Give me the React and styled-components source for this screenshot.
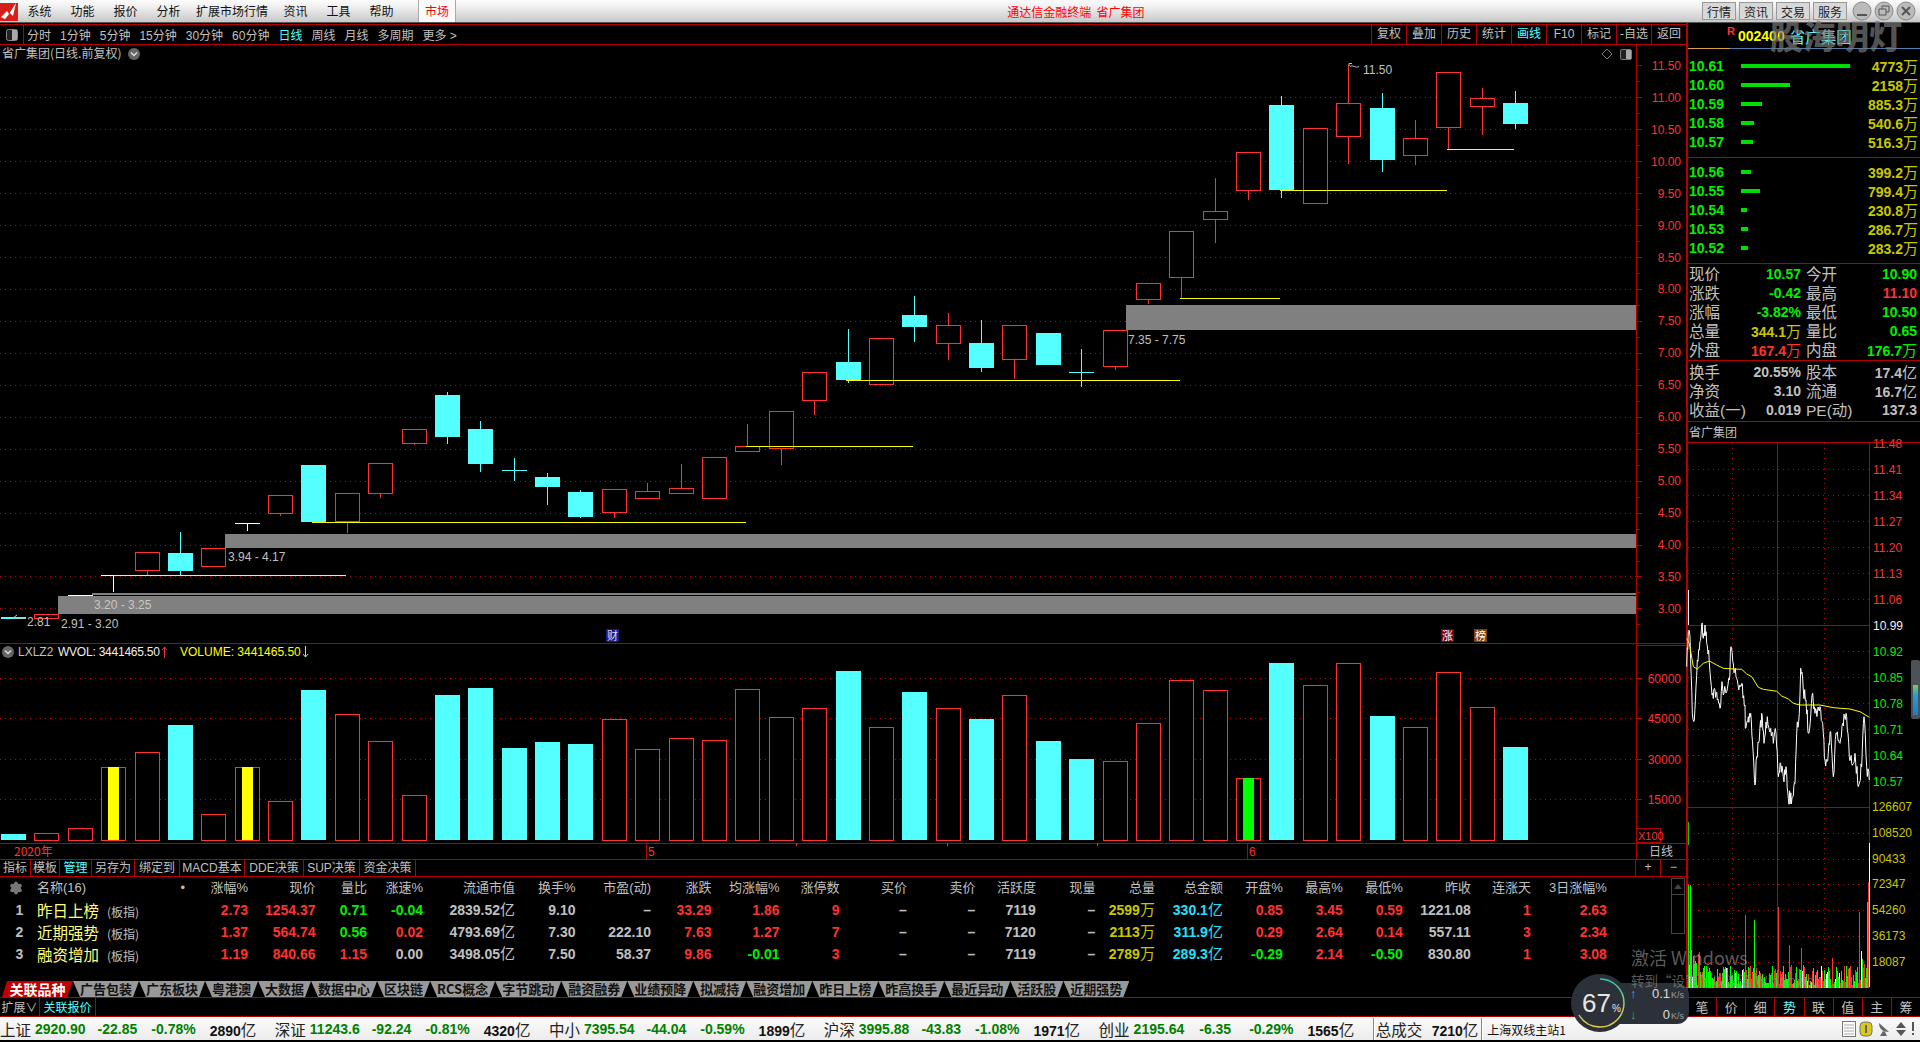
import React from "react"
import styled, { createGlobalStyle } from "styled-components"
import { Settings } from "lucide-react"

const LINE = "#b40000"
const RED = "#ff3232"
const GREEN = "#00f000"
const CYAN = "#54ffff"
const OLIVE = "#c8c800"
const GRAY = "#c0c0c0"
const FONT = `"Liberation Sans", "Noto Sans CJK SC", sans-serif`
const CJK = `"Noto Sans CJK SC", "Liberation Sans", sans-serif`

const GlobalStyle = createGlobalStyle`
  html, body {
    margin: 0;
    background: #000;
    overflow: hidden;
  }
`

const Page = styled.div`
  position: relative;
  width: 1920px;
  height: 1042px;
  background: #000;
  overflow: hidden;
  font-family: ${CJK};
  color: ${GRAY};
`

/* top menu */
const MenuBar = styled.div`
  display: flex;
  align-items: center;
  height: 22px;
  border-bottom: 1px solid #555;
  background: linear-gradient(#fcfcfc, #f0f0f0 30%, #c8c8c8);
  font-size: 12px;
  color: #111;
`
const Logo = styled.svg`
  width: 18px;
  height: 19px;
  flex: none;
`
const MenuItem = styled.div`
  padding: 0 ${(p) => p.$pad || 9.5}px;
  line-height: 22px;
  white-space: nowrap;
`
const MarketTab = styled.div`
  margin-left: 15px;
  width: 38px;
  box-sizing: border-box;
  height: 22px;
  line-height: 22px;
  text-align: center;
  white-space: nowrap;
  background: #fafafa;
  border-left: 1px solid #aaa;
  border-right: 1px solid #aaa;
  color: #f00;
`
const AppTitle = styled.div`
  margin-left: 551px;
  color: #f00;
  white-space: pre;
`
const MenuRight = styled.div`
  display: flex;
  align-items: center;
  margin-left: auto;
  padding-right: 4px;
`
const MenuButton = styled.div`
  width: 34px;
  height: 18px;
  line-height: 17px;
  text-align: center;
  box-sizing: border-box;
  margin-right: 3px;
  background: #d8d8d8;
  border: 1px solid #999;
  color: #222;
`
const WinButton = styled.svg`
  width: 20px;
  height: 20px;
  margin-left: 2px;
`

/* main layout */
const Main = styled.div`
  display: flex;
  height: 994px;
`
const LeftColumn = styled.div`
  display: flex;
  flex-direction: column;
  width: 1686px;
  flex: none;
`
const RightColumn = styled.div`
  display: flex;
  flex-direction: column;
  flex: 1;
  border-left: 2px solid ${LINE};
  min-width: 0;
`

/* period toolbar */
const Toolbar = styled.div`
  display: flex;
  align-items: center;
  height: 19px;
  margin-top: 1px;
  border-top: 1px solid ${LINE};
  border-bottom: 1px solid ${LINE};
  font-size: 12px;
`
const PanelToggle = styled.div`
  display: flex;
  align-items: center;
  justify-content: center;
  width: 23px;
  height: 100%;
  border-right: 1px solid ${LINE};
  margin-right: 3px;
`
const Periods = styled.div`
  display: flex;
  gap: 9px;
`
const Period = styled.span`
  color: ${(p) => (p.$active ? CYAN : GRAY)};
  font-family: ${FONT};
  white-space: nowrap;
`
const ToolCells = styled.div`
  display: flex;
  height: 100%;
  margin-left: auto;
`
const ToolCell = styled.div`
  width: 35px;
  box-sizing: border-box;
  text-align: center;
  line-height: 19px;
  white-space: nowrap;
  border-left: 1px solid ${LINE};
  color: ${(p) => (p.$active ? CYAN : GRAY)};
  font-family: ${FONT};
`

/* charts */
const ChartSvg = styled.svg`
  display: block;
  flex: none;
  overflow: visible;
`
const SvgText = styled.text`
  font-family: ${FONT};
  font-size: ${(p) => p.$size || 12}px;
  fill: ${(p) => p.$c || RED};
`

/* indicator tabs */
const IndicatorRow = styled.div`
  display: flex;
  height: 16px;
  border-bottom: 1px solid ${LINE};
  font-size: 12px;
  font-family: ${FONT};
`
const IndicatorCell = styled.div`
  width: ${(p) => p.$w}px;
  box-sizing: border-box;
  text-align: center;
  line-height: 16px;
  border-right: 1px solid ${LINE};
  white-space: nowrap;
  color: ${(p) => (p.$active ? CYAN : GRAY)};
`
const ZoomCells = styled.div`
  display: flex;
  margin-left: auto;
`
const ZoomCell = styled.div`
  width: ${(p) => p.$w}px;
  text-align: center;
  line-height: 15px;
  border-left: 1px solid ${LINE};
  color: ${GRAY};
`

/* block table */
const TableWrap = styled.div`
  display: flex;
  height: 104px;
`
const Table = styled.div`
  display: grid;
  grid-template-columns: 37px 168px 43px 67.5px 51.5px 56px 92px 60.5px 75.5px 60.5px 68px 60px 67.4px 68.5px 60.5px 59.5px 59.5px 68px 60px 60px 60px 68px 60px 76px;
  grid-auto-rows: 22px;
  align-content: start;
`
const HeadCell = styled.div`
  font-size: 13px;
  line-height: 22px;
  text-align: right;
  white-space: nowrap;
  color: ${GRAY};
  font-family: ${FONT};
`
const HeadName = styled(HeadCell)`
  text-align: left;
  display: flex;
  justify-content: space-between;
  padding-right: 20px;
`
const GearCell = styled.div`
  display: flex;
  align-items: center;
  padding-left: 9px;
`
const Cell = styled.div`
  font-family: ${FONT};
  font-size: 14px;
  font-weight: 700;
  line-height: 22px;
  text-align: right;
  white-space: nowrap;
  color: ${(p) => p.$c || GRAY};
`
const Unit = styled.span`
  font-size: 15px;
  font-weight: 400;
`
const IndexCell = styled.div`
  font-family: ${FONT};
  font-size: 14px;
  line-height: 22px;
  text-align: center;
  padding-left: 2px;
  font-weight: 700;
`
const NameCell = styled.div`
  line-height: 22px;
  white-space: nowrap;
  color: #ffff80;
  font-size: 15.5px;
`
const NameTag = styled.span`
  margin-left: 8px;
  font-size: 12px;
  color: ${GRAY};
`
const ScrollBar = styled.div`
  display: flex;
  flex-direction: column;
  width: 12px;
  height: 54px;
  margin: 1px 1px 0 auto;
  border: 1px solid #444;
`
const ScrollButton = styled.div`
  height: 15px;
  border-bottom: 1px solid #444;
  display: flex;
  align-items: center;
  justify-content: center;
  &::after {
    content: "";
    border: 4px solid transparent;
    border-top: 0;
    border-bottom: 5px solid #444;
  }
`

/* block tabs */
const BlockTabs = styled.div`
  display: flex;
  align-items: stretch;
  height: 16px;
  padding-left: 2px;
  border-bottom: 1px solid ${LINE};
`
const BlockTab = styled.div`
  padding: 0 ${(p) => (p.$active ? 7.5 : 7)}px;
  font-size: ${(p) => (p.$active ? 14 : 13)}px;
  font-weight: 700;
  line-height: 16px;
  white-space: nowrap;
  background: ${(p) => (p.$active ? "#c00000" : "#999")};
  color: ${(p) => (p.$active ? "#fff" : "#111")};
  clip-path: polygon(5px 0, 100% 0, calc(100% - 6px) 100%, 0 100%);
  ${(p) => !p.$active && "clip-path: polygon(0 0, 100% 0, calc(100% - 6px) 100%, 7px 100%);"}
`
const ExtendRow = styled.div`
  display: flex;
  height: 18px;
  border-bottom: 1px solid ${LINE};
  font-size: 12px;
`
const ExtendCell = styled.div`
  width: ${(p) => p.$w}px;
  text-align: center;
  line-height: 18px;
  border-right: 1px solid ${LINE};
  color: ${(p) => (p.$active ? CYAN : GRAY)};
  box-sizing: border-box;
`

/* right panel */
const StockHead = styled.div`
  display: flex;
  align-items: center;
  height: 26px;
  padding-left: 39px;
  box-sizing: border-box;
  border-bottom: 1px solid #4a7fb0;
  position: relative;
  &::after {
    content: "";
    position: absolute;
    left: 0;
    bottom: -1px;
    width: 42px;
    height: 1px;
    background: #d9a040;
  }
`
const StockMark = styled.span`
  color: ${RED};
  font: 700 11px ${FONT};
  margin-right: 3px;
  margin-top: -9px;
`
const StockCode = styled.span`
  color: #ff0;
  font: 700 14px ${FONT};
  margin-right: 5px;
`
const StockName = styled.span`
  color: ${CYAN};
  font-size: 15.5px;
`
const Book = styled.div`
  padding-top: ${(p) => p.$top}px;
  height: ${(p) => p.$h}px;
  box-sizing: border-box;
  border-bottom: 1px solid ${LINE};
`
const BookRow = styled.div`
  display: flex;
  align-items: center;
  height: 19px;
  padding: 0 2px 0 1px;
`
const BookPrice = styled.div`
  width: 52px;
  color: ${GREEN};
  font: 700 14px ${FONT};
`
const BookTrack = styled.div`
  flex: 1;
`
const BookBar = styled.div`
  height: 4px;
  background: #00e000;
`
const BookVol = styled.div`
  color: ${OLIVE};
  font: 700 14px ${FONT};
  white-space: nowrap;
`
const Quotes = styled.div`
  display: grid;
  grid-template-columns: 43px 69px 49px 67px;
  grid-auto-rows: 19px;
  align-content: start;
  padding: ${(p) => p.$top}px 0 0 1px;
  height: ${(p) => p.$h}px;
  box-sizing: border-box;
  border-bottom: 1px solid ${LINE};
`
const QuoteLabel = styled.div`
  font-size: 15.5px;
  line-height: 19px;
  white-space: nowrap;
  color: ${GRAY};
  font-family: ${FONT};
  padding-left: ${(p) => p.$pad || 0}px;
`
const QuoteValue = styled.div`
  font: 700 14px/19px ${FONT};
  text-align: right;
  white-space: nowrap;
  color: ${(p) => p.$c || GRAY};
`
const QuoteUnit = styled.span`
  font-size: 15px;
  font-weight: 400;
`
const MiniName = styled.div`
  height: 20px;
  line-height: 20px;
  font-size: 12px;
  padding-left: 1px;
  border-bottom: 1px solid ${LINE};
`
const ViewTabs = styled.div`
  display: flex;
  height: 18px;
  margin-top: 9px;
  border-top: 1px solid ${LINE};
  border-bottom: 1px solid ${LINE};
`
const ViewTab = styled.div`
  flex: 1;
  text-align: center;
  line-height: 18px;
  font-size: 13px;
  border-left: 1px solid ${LINE};
  color: ${(p) => (p.$active ? CYAN : GRAY)};
  &:first-child {
    border-left: 0;
  }
`

/* status bar */
const StatusBar = styled.div`
  display: flex;
  align-items: center;
  height: 22px;
  background: linear-gradient(#fafafa, #ececec);
  border-top: 1px solid #fff;
  color: #111;
  white-space: nowrap;
`
const IndexName = styled.span`
  font-size: 15.5px;
  width: ${(p) => p.$w || 31}px;
  margin-right: 4px;
  color: #222;
`
const IndexNum = styled.span`
  font: 700 14px ${FONT};
  color: #008000;
  margin-right: ${(p) => p.$mr}px;
`
const IndexAmount = styled.span`
  font: 700 14px ${FONT};
  color: #111;
  margin-right: ${(p) => p.$mr || 18.5}px;
`
const AmountUnit = styled.span`
  font-size: 15.5px;
  font-weight: 400;
  color: #222;
`
const StatusDivider = styled.span`
  width: 1px;
  height: 22px;
  background: #888;
  border-right: 1px solid #fff;
  margin-right: 1px;
`
const ServerName = styled.span`
  font-size: 12px;
  margin-left: 3px;
`
const StatusIcons = styled.div`
  display: flex;
  align-items: center;
  gap: 3px;
  margin-left: auto;
  padding-right: 4px;
`

/* things that float over the terminal */
const Watermark = styled.div`
  position: absolute;
  left: 1770px;
  top: 14px;
  font-size: 33px;
  font-weight: 900;
  line-height: 42px;
  color: rgba(122, 122, 122, 0.7);
  white-space: nowrap;
`
const ActivateTitle = styled.div`
  position: absolute;
  left: 1631px;
  top: 945px;
  font-size: 18px;
  line-height: 24px;
  color: rgba(150, 150, 150, 0.62);
  white-space: nowrap;
`
const ActivateHint = styled.div`
  position: absolute;
  left: 1631px;
  top: 970px;
  font-size: 13.5px;
  line-height: 20px;
  color: rgba(150, 150, 150, 0.62);
  white-space: nowrap;
`
const SpeedPill = styled.div`
  position: absolute;
  left: 1600px;
  top: 983px;
  width: 89px;
  height: 41px;
  border-radius: 0 12px 12px 0;
  background: #2c3139;
  display: flex;
  flex-direction: column;
  justify-content: space-between;
  padding: 3px 5px 2px 30px;
  box-sizing: border-box;
  font-family: ${FONT};
`
const SpeedRow = styled.div`
  display: flex;
  align-items: center;
  justify-content: space-between;
  color: #ddd;
  font-size: 13px;
`
const SpeedUp = styled.span`
  color: #4aa8e0;
`
const SpeedDown = styled.span`
  color: #3cb050;
`
const SpeedUnit = styled.span`
  font-size: 9px;
  color: #999;
  margin-left: 1px;
`
const GaugeWrap = styled.div`
  position: absolute;
  left: 1571px;
  top: 974px;
  width: 58px;
  height: 58px;
`
const GaugeValue = styled.div`
  position: absolute;
  left: 11px;
  top: 12px;
  color: #e6e6e6;
  font: 300 26px/34px ${FONT};
  white-space: nowrap;
`
const GaugePct = styled.span`
  font-size: 10px;
  margin-left: 1px;
`
const Meter = styled.div`
  position: absolute;
  left: 1911px;
  top: 660px;
  width: 9px;
  height: 59px;
  background: #4b5258;
  border-radius: 2px;
  padding: 4px 2px;
  box-sizing: border-box;
  display: flex;
  flex-direction: column;
  justify-content: flex-end;
`
const MeterFill = styled.div`
  height: 30px;
  background: linear-gradient(#7ad04a, #2a9ad8 35%, #1e7ec0);
`

/* data */
const cx = (i) => Math.round(1 + 33.38 * i)

// kind, body top, body bottom, wick top, wick bottom
const candles = [
  ["c", 617, 619],
  ["r", 614, 618],
  ["w", 595, 595],
  ["w", 575, 575, 575, 592],
  ["r", 552, 570, 552, 575],
  ["c", 553, 571, 532, 575],
  ["r", 548, 566],
  ["w", 523, 523, 523, 531],
  ["r", 495, 513, 495, 516],
  ["c", 465, 522],
  ["r", 493, 521, 493, 533],
  ["r", 463, 493, 463, 498],
  ["r", 429, 443, 429, 445],
  ["c", 395, 437, 392, 444],
  ["c", 429, 464, 421, 472],
  ["c", 470, 472, 458, 481],
  ["c", 477, 487, 473, 505],
  ["c", 492, 517, 490, 518],
  ["r", 489, 512, 489, 518],
  ["r", 491, 498, 483, 499],
  ["r", 488, 493, 464, 493],
  ["r", 457, 498],
  ["r", 446, 451, 424, 451],
  ["r", 411, 448, 411, 465],
  ["r", 372, 400, 372, 415],
  ["c", 362, 380, 329, 383],
  ["r", 338, 384],
  ["c", 315, 327, 296, 342],
  ["r", 325, 343, 313, 360],
  ["c", 343, 368, 320, 372],
  ["r", 325, 359, 325, 379],
  ["c", 333, 365],
  ["c", 372, 373, 349, 387],
  ["r", 330, 366, 330, 370],
  ["r", 283, 299, 283, 304],
  ["r", 231, 277, 231, 298],
  ["r", 211, 219, 178, 243],
  ["r", 152, 190, 152, 200],
  ["c", 105, 190, 96, 198],
  ["r", 128, 203],
  ["r", 103, 136, 65, 164],
  ["c", 108, 160, 93, 172],
  ["r", 138, 155, 120, 165],
  ["r", 72, 127, 72, 149],
  ["r", 98, 106, 88, 135],
  ["c", 103, 124, 91, 129],
]

const volTops = [834, 833, 828, 767, 752, 725, 814, 767, 801, 690, 714, 741, 795, 695, 688, 748, 742, 744, 719, 749, 738, 740, 689, 717, 708, 671, 727, 692, 708, 719, 695, 741, 759, 761, 723, 680, 690, 778, 663, 685, 663, 716, 727, 672, 707, 747]
const volInner = { 3: "#ff0", 7: "#ff0", 37: "#00ff00" }

const yellowLines = [
  [113, 346, 575],
  [312, 746, 522],
  [746, 913, 446],
  [846, 1180, 380],
  [1180, 1280, 298],
  [1280, 1447, 190],
  [1447, 1514, 149],
]

const priceLabels = ["11.50", "11.00", "10.50", "10.00", "9.50", "9.00", "8.50", "8.00", "7.50", "7.00", "6.50", "6.00", "5.50", "5.00", "4.50", "4.00", "3.50", "3.00"]
const priceY = (k) => 65.4 + 31.94 * k

const Candle = ({ i, kind, top, bottom, wTop, wBot }) => {
  const x = cx(i)
  const mid = x + 12.5
  const color = kind === "c" ? CYAN : kind === "w" ? "#fff" : RED
  if (bottom - top < 3) {
    return (
      <g stroke={color} shapeRendering="crispEdges">
        <line x1={x} x2={x + 25} y1={top + 0.5} y2={top + 0.5} strokeWidth={kind === "c" && i === 0 ? 2 : 1} />
        {wTop !== undefined && <line x1={mid} x2={mid} y1={wTop} y2={wBot} />}
      </g>
    )
  }
  return (
    <g shapeRendering="crispEdges">
      {wTop !== undefined && <line x1={mid} x2={mid} y1={wTop} y2={wBot} stroke={color} />}
      {kind === "c" ? (
        <rect x={x} y={top} width={25} height={bottom - top} fill={CYAN} />
      ) : (
        <rect x={x + 0.5} y={top + 0.5} width={24} height={bottom - top} fill="#000" stroke={RED} />
      )}
    </g>
  )
}

const Dotted = ({ x1, x2, y1, y2 }) => (
  <line x1={x1} x2={x2} y1={y1} y2={y2} stroke="#c00000" strokeDasharray="1 4" shapeRendering="crispEdges" />
)

const PriceChart = () => (
  <ChartSvg width="1686" height="599" viewBox="0 45 1686 599">
    {priceLabels.map((_, k) => k > 0 && <Dotted key={k} x1={0} x2={1636} y1={Math.round(priceY(k)) + 0.5} y2={Math.round(priceY(k)) + 0.5} />)}
    <g fill="#808080" shapeRendering="crispEdges">
      <rect x="1126" y="305" width="510" height="25" />
      <rect x="225" y="534" width="1411" height="14" />
      <rect x="58" y="596" width="1578" height="18" />
      <rect x="92" y="593" width="1544" height="2" />
    </g>
    {candles.map(([kind, top, bottom, wTop, wBot], i) => (
      <Candle key={i} i={i} kind={kind} top={top} bottom={bottom} wTop={wTop} wBot={wBot} />
    ))}
    <g stroke="#ff0" shapeRendering="crispEdges">
      {yellowLines.map(([a, b, y]) => (
        <line key={y} x1={a} x2={b} y1={y + 0.5} y2={y + 0.5} />
      ))}
    </g>
    <SvgText x="1128" y="344" $c={GRAY}>7.35 - 7.75</SvgText>
    <SvgText x="228" y="561" $c={GRAY}>3.94 - 4.17</SvgText>
    <SvgText x="94" y="609" $c="#c8c8c8">3.20 - 3.25</SvgText>
    <SvgText x="61" y="628" $c={GRAY}>2.91 - 3.20</SvgText>
    <SvgText x="27" y="626" $c={GRAY}>2.81</SvgText>
    <path d="M13 618h12M13 618l4-3" stroke={GRAY} fill="none" />
    <path d="M1349 66v-2.500h3M1350 66.500c3-2 5 2 9 0" stroke={GRAY} fill="none" />
    <SvgText x="1363" y="74" $c={GRAY}>11.50</SvgText>

    <SvgText x="2" y="58" $c={GRAY} style={{ fontFamily: CJK }}>省广集团(日线.前复权)</SvgText>
    <circle cx="134" cy="54" r="6" fill="#666" />
    <path d="M131 52.500l3 3 3-3" stroke="#ddd" fill="none" strokeWidth="1.500" />
    <path d="M1607 49l5 5-5 5-5-5z" stroke="#777" fill="none" />
    <rect x="1620.500" y="49.500" width="11" height="10" rx="1.500" fill="#222" stroke="#777" />
    <rect x="1626" y="50" width="5" height="9" fill="#aaa" />

    <g>
      <rect x="606" y="629" width="13" height="13" fill="#0a1f90" />
      <SvgText x="607" y="640" $c="#dde" $size={11} style={{ fontFamily: CJK }}>财</SvgText>
      <rect x="1441" y="629" width="13" height="13" fill="#800000" />
      <SvgText x="1442" y="640" $c="#fff" $size={11} style={{ fontFamily: CJK }}>涨</SvgText>
      <rect x="1474" y="629" width="13" height="13" fill="#804000" />
      <SvgText x="1475" y="640" $c="#fff" $size={11} style={{ fontFamily: CJK }}>榜</SvgText>
    </g>

    <line x1="1636.500" x2="1636.500" y1="45" y2="644" stroke={LINE} />
    {priceLabels.map((label, k) => (
      <g key={label}>
        <line x1="1636" x2="1642" y1={Math.round(priceY(k)) + 0.5} y2={Math.round(priceY(k)) + 0.5} stroke={LINE} />
        <line x1="1636" x2="1640" y1={Math.round(priceY(k) + 16) + 0.5} y2={Math.round(priceY(k) + 16) + 0.5} stroke={LINE} />
        <SvgText x="1681" y={priceY(k) + 4.5} textAnchor="end">{label}</SvgText>
      </g>
    ))}
  </ChartSvg>
)

const volumeLabels = [
  ["60000", 678],
  ["45000", 718],
  ["30000", 759],
  ["15000", 799],
]

const VolumeChart = () => (
  <ChartSvg width="1686" height="199" viewBox="0 644 1686 199">
    <line x1="0" x2="1686" y1="643.500" y2="643.500" stroke={LINE} />
    {volumeLabels.map(([, y]) => <Dotted key={y} x1={0} x2={1636} y1={y + 0.5} y2={y + 0.5} />)}
    {volTops.map((top, i) => {
      const x = cx(i)
      const solid = candles[i][0] === "c"
      return (
        <g key={i} shapeRendering="crispEdges">
          {solid ? (
            <rect x={x} y={top} width={25} height={840 - top} fill={CYAN} />
          ) : (
            <rect x={x + 0.5} y={top + 0.5} width={24} height={839.5 - top} fill="#000" stroke={RED} />
          )}
          {volInner[i] && <rect x={x + 7} y={top} width={11} height={840 - top} fill={volInner[i]} />}
        </g>
      )
    })}
    <circle cx="8" cy="652" r="6" fill="#666" />
    <path d="M5 650.500l3 3 3-3" stroke="#ddd" fill="none" strokeWidth="1.500" />
    <SvgText x="18" y="656" $c={GRAY}>LXLZ2</SvgText>
    <SvgText x="58" y="656" $c="#eee" textLength="102">WVOL: 3441465.50</SvgText>
    <path d="M164.500 647v11M162 650l2.500-3 2.500 3" stroke={RED} fill="none" />
    <SvgText x="180" y="656" $c="#ff0">VOLUME: 3441465.50</SvgText>
    <path d="M305.500 646v11M303 654l2.500 3 2.500-3" stroke={CYAN} fill="none" />

    <line x1="1636.500" x2="1636.500" y1="644" y2="843" stroke={LINE} />
    <line x1="1636" x2="1686" y1="645.500" y2="645.500" stroke={LINE} />
    {volumeLabels.map(([label, y]) => (
      <g key={label}>
        <line x1="1636" x2="1642" y1={y + 0.5} y2={y + 0.5} stroke={LINE} />
        <SvgText x="1681" y={y + 4.5} textAnchor="end">{label}</SvgText>
      </g>
    ))}
    <rect x="1636.500" y="828.500" width="24" height="14" fill="none" stroke={LINE} />
    <SvgText x="1638" y="840" $size={11}>X100</SvgText>
  </ChartSvg>
)

const DateAxis = () => (
  <ChartSvg width="1686" height="17" viewBox="0 843 1686 17">
    <line x1="0" x2="1686" y1="843.500" y2="843.500" stroke={LINE} />
    <line x1="0" x2="1686" y1="859.500" y2="859.500" stroke={LINE} />
    <line x1="1636.500" x2="1636.500" y1="843" y2="860" stroke={LINE} />
    <SvgText x="14" y="856" style={{ fontFamily: CJK }}>2020年</SvgText>
    {[646.5, 1247.5].map((x) => <line key={x} x1={x} x2={x} y1="843" y2="860" stroke={LINE} />)}
    <SvgText x="648" y="856">5</SvgText>
    <SvgText x="1249" y="856">6</SvgText>
    {[796, 947, 1097].map((x) => <line key={x} x1={x + 0.5} x2={x + 0.5} y1="843" y2="846" stroke={RED} />)}
    <SvgText x="1661" y="856" $c={GRAY} textAnchor="middle" style={{ fontFamily: CJK }}>日线</SvgText>
  </ChartSvg>
)

/* intraday panel, traced from the session curve */
const whiteTrace = [[80, 200], [85, 95], [90, 110], [97, 340], [103, 360], [108, 260], [112, 180], [118, 150], [125, 75], [130, 115], [135, 75], [140, 130], [146, 150], [152, 240], [158, 280], [165, 270], [172, 300], [180, 325], [186, 245], [192, 280], [200, 275], [208, 240], [213, 140], [220, 190], [228, 230], [236, 270], [245, 250], [255, 315], [256, 385], [265, 350], [272, 340], [285, 555], [290, 470], [298, 420], [305, 340], [312, 430], [322, 350], [332, 385], [340, 430], [348, 400], [355, 530], [362, 490], [370, 530], [380, 520], [385, 595], [398, 590], [405, 550], [410, 400], [418, 340], [422, 205], [430, 270], [438, 300], [445, 400], [458, 280], [465, 340], [480, 320], [490, 400], [495, 480], [505, 460], [512, 395], [520, 530], [528, 400], [540, 430], [548, 370], [560, 350], [568, 470], [575, 490], [585, 460], [595, 560], [605, 500], [612, 350], [620, 500], [628, 540]]
const avgTrace = [[80, 115], [88, 130], [100, 200], [112, 207], [130, 190], [148, 183], [170, 195], [190, 205], [220, 207], [245, 208], [260, 222], [275, 230], [295, 262], [310, 268], [350, 274], [365, 288], [385, 297], [400, 310], [420, 315], [480, 315], [520, 323], [570, 327], [600, 335], [628, 352]]
const toPage = ([x, y]) => `${(1660 + x / 3).toFixed(1)},${(600 + y / 3).toFixed(1)}`

let seed = 7
const rnd = () => {
  seed = (seed * 16807) % 2147483647
  return seed / 2147483647
}

// the real tick line is far busier than the trace, so fill each span with small swings
const jagged = whiteTrace.flatMap((p, k) => {
  const next = whiteTrace[k + 1]
  if (!next) return [p]
  const out = [p]
  const steps = Math.max(2, Math.round((next[0] - p[0]) / 2))
  for (let s = 1; s < steps; s++) {
    const t = s / steps
    out.push([p[0] + (next[0] - p[0]) * t, p[1] + (next[1] - p[1]) * t + (rnd() - 0.5) * 44])
  }
  return out
})

const spikes = { 1688: 885, 1690: 885, 1745: 915, 1754: 920, 1778: 907, 1789: 945, 1801: 948, 1832: 958, 1859: 912, 1867: 902, 1868: 882 }
const miniBars = []
for (let x = 1688; x < 1869; x++) {
  const early = x < 1700 ? 28 : 0
  const late = x > 1858 ? 18 : 0
  const h = spikes[x] ? 988 - spikes[x] : 3 + rnd() * 20 + rnd() * early + rnd() * late
  const r = rnd()
  const color = x === 1868 ? RED : r < 0.5 ? "#00ff00" : r < 0.9 ? RED : "#fff"
  miniBars.push([x, h, color])
}

const upperTicks = ["11.48", "11.41", "11.34", "11.27", "11.20", "11.13", "11.06"]
const lowerTicks = ["10.92", "10.85", "10.78", "10.71", "10.64", "10.57"]
const volTicks = ["108520", "90433", "72347", "54260", "36173", "18087"]

const IntradayChart = () => (
  <ChartSvg width="232" height="545" viewBox="1688 443 232 545">
    {upperTicks.map((_, k) => k > 0 && <Dotted key={k} x1={1688} x2={1869} y1={443.5 + 26 * k} y2={443.5 + 26 * k} />)}
    {lowerTicks.map((_, k) => <Dotted key={k} x1={1688} x2={1869} y1={651.5 + 26 * k} y2={651.5 + 26 * k} />)}
    {volTicks.map((_, k) => <Dotted key={k} x1={1688} x2={1869} y1={833.5 + 25.7 * k} y2={833.5 + 25.7 * k} />)}
    <Dotted x1={1732.5} x2={1732.5} y1={443} y2={988} />
    <Dotted x1={1824.5} x2={1824.5} y1={443} y2={988} />
    <g stroke={LINE} shapeRendering="crispEdges">
      <line x1="1777.500" x2="1777.500" y1="443" y2="988" />
      <line x1="1688" x2="1869" y1="625.500" y2="625.500" />
      <line x1="1688" x2="1869" y1="807.500" y2="807.500" />
      <line x1="1869.500" x2="1869.500" y1="443" y2="843" />
    </g>
    <line x1="1869.500" x2="1869.500" y1="843" y2="988" stroke="#fff" />
    <line x1="1688" x2="1870" y1="987.500" y2="987.500" stroke={LINE} />

    <polyline points={jagged.map(toPage).join(" ")} fill="none" stroke="#fff" strokeWidth="1" />
    <polyline points={avgTrace.map(toPage).join(" ")} fill="none" stroke="#ff0" strokeWidth="1" />
    <line x1="1688.500" x2="1688.500" y1="590" y2="625" stroke="#fff" />
    <line x1="1688.500" x2="1688.500" y1="822" y2="845" stroke="#0c0" />

    <g shapeRendering="crispEdges">
      {miniBars.map(([x, h, color]) => (
        <rect key={x} x={x} y={988 - h} width="1" height={h} fill={color} />
      ))}
    </g>

    {upperTicks.map((label, k) => (
      <SvgText key={label} x="1873" y={448 + 26 * k}>{label}</SvgText>
    ))}
    <SvgText x="1873" y="630" $c="#eee">10.99</SvgText>
    {lowerTicks.map((label, k) => (
      <SvgText key={label} x="1873" y={656 + 26 * k} $c={GREEN}>{label}</SvgText>
    ))}
    <SvgText x="1872" y="811" $c={OLIVE}>126607</SvgText>
    {volTicks.map((label, k) => (
      <SvgText key={label} x="1872" y={837 + 25.7 * k} $c={OLIVE}>{label}</SvgText>
    ))}
  </ChartSvg>
)

/* table data */
const headers = ["涨幅%", "现价", "量比", "涨速%", "流通市值", "换手%", "市盈(动)", "涨跌", "均涨幅%", "涨停数", "买价", "卖价", "活跃度", "现量", "总量", "总金额", "开盘%", "最高%", "最低%", "昨收", "连涨天", "3日涨幅%"]

const rows = [
  {
    name: "昨日上榜",
    cells: [["2.73", RED], ["1254.37", RED], ["0.71", GREEN], ["-0.04", GREEN], ["2839.52", GRAY, "亿"], ["9.10"], ["–"], ["33.29", RED], ["1.86", RED], ["9", RED], ["–"], ["–"], ["7119"], ["–"], ["2599", OLIVE, "万"], ["330.1", "#20e0ff", "亿"], ["0.85", RED], ["3.45", RED], ["0.59", RED], ["1221.08"], ["1", RED], ["2.63", RED]],
  },
  {
    name: "近期强势",
    cells: [["1.37", RED], ["564.74", RED], ["0.56", GREEN], ["0.02", RED], ["4793.69", GRAY, "亿"], ["7.30"], ["222.10"], ["7.63", RED], ["1.27", RED], ["7", RED], ["–"], ["–"], ["7120"], ["–"], ["2113", OLIVE, "万"], ["311.9", "#20e0ff", "亿"], ["0.29", RED], ["2.64", RED], ["0.14", RED], ["557.11"], ["3", RED], ["2.34", RED]],
  },
  {
    name: "融资增加",
    cells: [["1.19", RED], ["840.66", RED], ["1.15", RED], ["0.00"], ["3498.05", GRAY, "亿"], ["7.50"], ["58.37"], ["9.86", RED], ["-0.01", GREEN], ["3", RED], ["–"], ["–"], ["7119"], ["–"], ["2789", OLIVE, "万"], ["289.3", "#20e0ff", "亿"], ["-0.29", GREEN], ["2.14", RED], ["-0.50", GREEN], ["830.80"], ["1", RED], ["3.08", RED]],
  },
]

const blockNames = ["广告包装", "广东板块", "粤港澳", "大数据", "数据中心", "区块链", "RCS概念", "字节跳动", "融资融券", "业绩预降", "拟减持", "融资增加", "昨日上榜", "昨高换手", "最近异动", "活跃股", "近期强势"]

const sellRows = [["10.61", 109, "4773"], ["10.60", 49, "2158"], ["10.59", 21, "885.3"], ["10.58", 13, "540.6"], ["10.57", 12, "516.3"]]
const buyRows = [["10.56", 10, "399.2"], ["10.55", 19, "799.4"], ["10.54", 6, "230.8"], ["10.53", 7, "286.7"], ["10.52", 7, "283.2"]]

const BookRows = ({ data }) =>
  data.map(([price, w, vol]) => (
    <BookRow key={price}>
      <BookPrice>{price}</BookPrice>
      <BookTrack>
        <BookBar style={{ width: w }} />
      </BookTrack>
      <BookVol>{vol}<QuoteUnit>万</QuoteUnit></BookVol>
    </BookRow>
  ))

const QuoteRow = ({ a, b, va, vb, ca, cb, ua, ub }) => (
  <>
    <QuoteLabel>{a}</QuoteLabel>
    <QuoteValue $c={ca}>{va}{ua && <QuoteUnit>{ua}</QuoteUnit>}</QuoteValue>
    <QuoteLabel $pad={5}>{b}</QuoteLabel>
    <QuoteValue $c={cb}>{vb}{ub && <QuoteUnit>{ub}</QuoteUnit>}</QuoteValue>
  </>
)

const StatusIndex = ({ name, price, chg, pct, amount, priceGap = 12, chgGap = 14 }) => (
  <>
    <IndexName>{name}</IndexName>
    <IndexNum $mr={priceGap}>{price}</IndexNum>
    <IndexNum $mr={chgGap}>{chg}</IndexNum>
    <IndexNum $mr={14}>{pct}</IndexNum>
    <IndexAmount>{amount}<AmountUnit>亿</AmountUnit></IndexAmount>
  </>
)

const App = () => (
  <Page>
    <GlobalStyle />
    <MenuBar>
      <Logo viewBox="0 0 18 19">
        <rect width="18" height="19" y="1" fill="#d8201a" />
        <path d="M1 15L7 9l2 3 7-11-3 13-3-3-5 6z" fill="#fff" />
      </Logo>
      {["系统", "功能", "报价", "分析"].map((t) => <MenuItem key={t}>{t}</MenuItem>)}
      <MenuItem $pad={6}>扩展市场行情</MenuItem>
      {["资讯", "工具", "帮助"].map((t) => <MenuItem key={t}>{t}</MenuItem>)}
      <MarketTab>市场</MarketTab>
      <AppTitle>通达信金融终端  省广集团</AppTitle>
      <MenuRight>
        {["行情", "资讯", "交易", "服务"].map((t) => <MenuButton key={t}>{t}</MenuButton>)}
        <WinButton viewBox="0 0 20 20"><circle cx="10" cy="10" r="9" fill="#bbb" stroke="#888" /><path d="M5 14h10" stroke="#555" strokeWidth="2" /></WinButton>
        <WinButton viewBox="0 0 20 20"><circle cx="10" cy="10" r="9" fill="#bbb" stroke="#888" /><path d="M5 8h7v6H5zM8 8V5h7v6h-3" stroke="#555" fill="none" /></WinButton>
        <WinButton viewBox="0 0 20 20"><circle cx="10" cy="10" r="9" fill="#bbb" stroke="#888" /><path d="M6 6l8 8M14 6l-8 8" stroke="#555" strokeWidth="2" /></WinButton>
      </MenuRight>
    </MenuBar>

    <Main>
      <LeftColumn>
        <Toolbar>
          <PanelToggle>
            <svg width="12" height="12" viewBox="0 0 12 12">
              <rect x="0.500" y="0.500" width="11" height="11" rx="2" fill="#222" stroke="#888" />
              <rect x="6" y="1" width="5" height="10" fill="#aaa" />
            </svg>
          </PanelToggle>
          <Periods>
            {["分时", "1分钟", "5分钟", "15分钟", "30分钟", "60分钟"].map((t) => <Period key={t}>{t}</Period>)}
            <Period $active>日线</Period>
            {["周线", "月线", "多周期", "更多 >"].map((t) => <Period key={t}>{t}</Period>)}
          </Periods>
          <ToolCells>
            {["复权", "叠加", "历史", "统计"].map((t) => <ToolCell key={t}>{t}</ToolCell>)}
            <ToolCell $active>画线</ToolCell>
            {["F10", "标记", "-自选", "返回"].map((t) => <ToolCell key={t}>{t}</ToolCell>)}
          </ToolCells>
        </Toolbar>
        <PriceChart />
        <VolumeChart />
        <DateAxis />
        <IndicatorRow>
          <IndicatorCell $w={31}>指标</IndicatorCell>
          <IndicatorCell $w={29}>模板</IndicatorCell>
          <IndicatorCell $w={32} $active>管理</IndicatorCell>
          <IndicatorCell $w={43}>另存为</IndicatorCell>
          <IndicatorCell $w={45}>绑定到</IndicatorCell>
          <IndicatorCell $w={65}>MACD基本</IndicatorCell>
          <IndicatorCell $w={59}>DDE决策</IndicatorCell>
          <IndicatorCell $w={56}>SUP决策</IndicatorCell>
          <IndicatorCell $w={56}>资金决策</IndicatorCell>
          <ZoomCells>
            <ZoomCell $w={24}>+</ZoomCell>
            <ZoomCell $w={25}>−</ZoomCell>
          </ZoomCells>
        </IndicatorRow>
        <TableWrap>
          <Table>
            <GearCell><Settings size={14} color="#777" fill="#777" /></GearCell>
            <HeadName>名称(16)<span>•</span></HeadName>
            {headers.map((h) => <HeadCell key={h}>{h}</HeadCell>)}
            {rows.map((row, r) => (
              <React.Fragment key={row.name}>
                <IndexCell>{r + 1}</IndexCell>
                <NameCell>{row.name}<NameTag>(板指)</NameTag></NameCell>
                {row.cells.map(([v, c, u], k) => (
                  <Cell key={k} $c={c}>{v}{u && <Unit>{u}</Unit>}</Cell>
                ))}
              </React.Fragment>
            ))}
          </Table>
          <ScrollBar><ScrollButton /></ScrollBar>
        </TableWrap>
        <BlockTabs>
          <BlockTab $active>关联品种</BlockTab>
          {blockNames.map((t) => <BlockTab key={t}>{t}</BlockTab>)}
        </BlockTabs>
        <ExtendRow>
          <ExtendCell $w={40}>扩展∨</ExtendCell>
          <ExtendCell $w={56} $active>关联报价</ExtendCell>
        </ExtendRow>
      </LeftColumn>

      <RightColumn>
        <StockHead>
          <StockMark>R</StockMark>
          <StockCode>002400</StockCode>
          <StockName>省广集团</StockName>
        </StockHead>
        <Book $top={7} $h={109}><BookRows data={sellRows} /></Book>
        <Book $top={4} $h={106}><BookRows data={buyRows} /></Book>
        <Quotes $top={1} $h={97}>
          <QuoteRow a="现价" va="10.57" ca={GREEN} b="今开" vb="10.90" cb={GREEN} />
          <QuoteRow a="涨跌" va="-0.42" ca={GREEN} b="最高" vb="11.10" cb={RED} />
          <QuoteRow a="涨幅" va="-3.82%" ca={GREEN} b="最低" vb="10.50" cb={GREEN} />
          <QuoteRow a="总量" va="344.1" ca={OLIVE} ua="万" b="量比" vb="0.65" cb={GREEN} />
          <QuoteRow a="外盘" va="167.4" ca={RED} ua="万" b="内盘" vb="176.7" cb={GREEN} ub="万" />
        </Quotes>
        <Quotes $top={2} $h={61}>
          <QuoteRow a="换手" va="20.55%" b="股本" vb="17.4" ub="亿" />
          <QuoteRow a="净资" va="3.10" b="流通" vb="16.7" ub="亿" />
          <QuoteRow a="收益(一)" va="0.019" b="PE(动)" vb="137.3" />
        </Quotes>
        <MiniName>省广集团</MiniName>
        <IntradayChart />
        <ViewTabs>
          {["笔", "价", "细"].map((t) => <ViewTab key={t}>{t}</ViewTab>)}
          <ViewTab $active>势</ViewTab>
          {["联", "值", "主", "筹"].map((t) => <ViewTab key={t}>{t}</ViewTab>)}
        </ViewTabs>
      </RightColumn>
    </Main>

    <StatusBar>
      <StatusIndex name="上证" price="2920.90" chg="-22.85" pct="-0.78%" amount="2890" />
      <StatusIndex name="深证" price="11243.6" chg="-92.24" pct="-0.81%" amount="4320" />
      <StatusIndex name="中小" price="7395.54" chg="-44.04" pct="-0.59%" amount="1899" />
      <StatusIndex name="沪深" price="3995.88" chg="-43.83" pct="-1.08%" amount="1971" />
      <StatusIndex name="创业" price="2195.64" chg="-6.35" pct="-0.29%" amount="1565" priceGap={15} chgGap={18} />
      <StatusDivider />
      <IndexName $w={52}>总成交</IndexName>
      <IndexAmount $mr={3}>7210<AmountUnit>亿</AmountUnit></IndexAmount>
      <StatusDivider />
      <ServerName>上海双线主站1</ServerName>
      <StatusIcons>
        <svg width="14" height="16" viewBox="0 0 14 16"><rect x="0.500" y="0.500" width="13" height="15" fill="#fff" stroke="#777" /><path d="M2 4h10M2 7h10M2 10h10M2 13h10" stroke="#aaa" /></svg>
        <svg width="14" height="16" viewBox="0 0 14 16"><rect x="1" y="1" width="12" height="14" rx="4" fill="#d8c820" stroke="#777" /><path d="M7 4v8" stroke="#665" strokeWidth="2" /></svg>
        <svg width="16" height="16" viewBox="0 0 16 16"><path d="M3 2c0 6 4 9 10 9L3 2zM7 10l-3 5h7l-2-4" fill="#666" /></svg>
        <svg width="12" height="16" viewBox="0 0 12 16"><path d="M6 1l5 6H1zM6 15l5-6H1z" fill="#555" /></svg>
        <svg width="6" height="16" viewBox="0 0 6 16"><path d="M3 1v9M3 12v2" stroke="#555" strokeWidth="2" /></svg>
      </StatusIcons>
    </StatusBar>

    <Watermark>股海明灯</Watermark>
    <Meter><MeterFill /></Meter>
    <ActivateTitle>激活 Windows</ActivateTitle>
    <SpeedPill>
      <SpeedRow><SpeedUp>↑</SpeedUp><span>0.1<SpeedUnit>K/s</SpeedUnit></span></SpeedRow>
      <SpeedRow><SpeedDown>↓</SpeedDown><span>0<SpeedUnit>K/s</SpeedUnit></span></SpeedRow>
    </SpeedPill>
    <ActivateHint>转到“设置”以激活 Windows。</ActivateHint>
    <GaugeWrap>
      <svg width="58" height="58" viewBox="0 0 58 58">
        <defs>
          <linearGradient id="gaugeArc" x1="0" y1="0" x2="0" y2="1">
            <stop offset="0" stopColor="#30c8b0" />
            <stop offset="1" stopColor="#e8d040" />
          </linearGradient>
        </defs>
        <circle cx="29" cy="29" r="29" fill="#2c3139" />
        <path d="M29 5a24 24 0 0 1 0 48a24 24 0 0 1-21-12" fill="none" stroke="url(#gaugeArc)" strokeWidth="1.500" />
      </svg>
      <GaugeValue>67<GaugePct>%</GaugePct></GaugeValue>
    </GaugeWrap>
  </Page>
)

export default App
